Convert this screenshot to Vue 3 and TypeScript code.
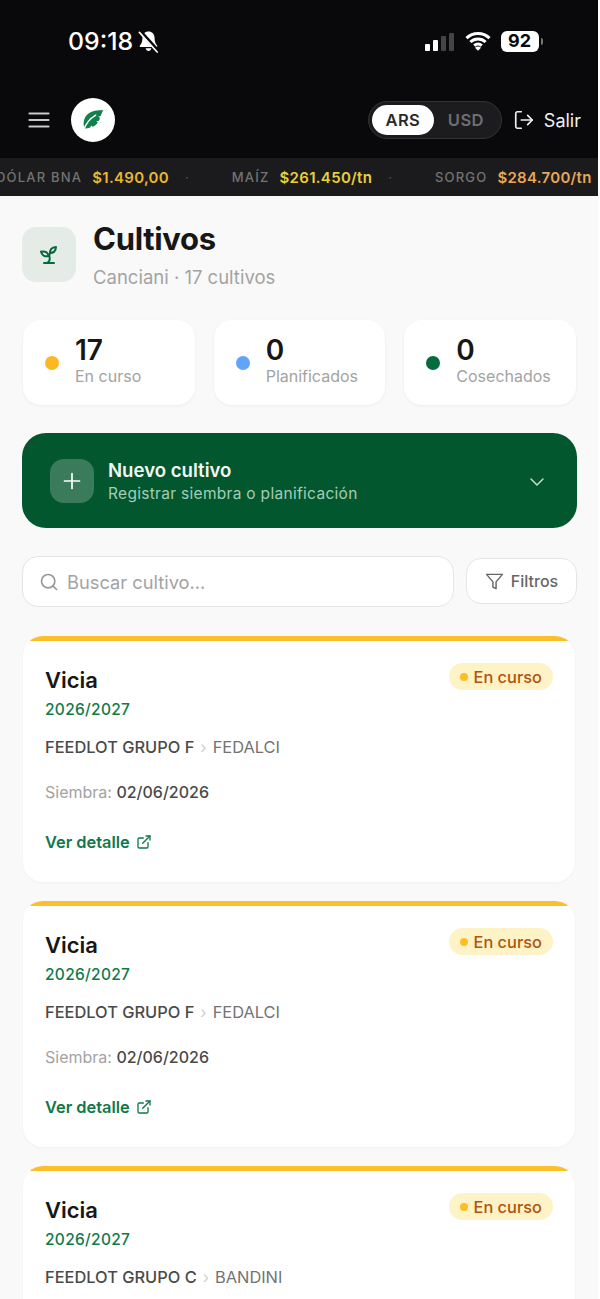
<script setup lang="ts">
interface Ticker { label: string; value: string; tone: string }
interface Crop { name: string; season: string; owner: string; field: string; date: string }

const tickers: Ticker[] = [
  { label: 'DÓLAR BNA', value: '$1.490,00', tone: 'gold' },
  { label: 'MAÍZ', value: '$261.450/tn', tone: 'yellow' },
  { label: 'SORGO', value: '$284.700/tn', tone: 'orange' },
]

const stats = [
  { value: 17, label: 'En curso', color: '#fbb724' },
  { value: 0, label: 'Planificados', color: '#60a5fa' },
  { value: 0, label: 'Cosechados', color: '#046c3c' },
]

const crops: Crop[] = [
  { name: 'Vicia', season: '2026/2027', owner: 'FEEDLOT GRUPO F', field: 'FEDALCI', date: '02/06/2026' },
  { name: 'Vicia', season: '2026/2027', owner: 'FEEDLOT GRUPO F', field: 'FEDALCI', date: '02/06/2026' },
  { name: 'Vicia', season: '2026/2027', owner: 'FEEDLOT GRUPO C', field: 'BANDINI', date: '02/06/2026' },
]
</script>

<template>
  <div class="screen">
    <header class="top">
      <div class="status">
        <div class="status-left">
          <span class="clock">09:18</span>
          <svg class="bell" viewBox="0 0 24 24" width="23" height="23" fill="#fff">
            <path d="M12 1.500c-3.800 0-6.300 2.800-6.300 6.700 0 4.500-1.100 6.300-2.700 8.100-.5.6-.1 1.500.7 1.500h16.600c.8 0 1.200-.9.7-1.500-1.600-1.800-2.700-3.600-2.700-8.100 0-3.900-2.500-6.700-6.300-6.700z" />
            <path d="M9 19h6c-.3 1.700-1.500 2.800-3 2.800s-2.700-1.100-3-2.800z" />
            <path d="M3.500 1.500 22 22" stroke="#09090b" stroke-width="3.800" />
            <path d="M2.500 2.500 21 23" stroke="#fff" stroke-width="1.700" stroke-linecap="round" />
          </svg>
        </div>
        <div class="status-right">
          <div class="signal">
            <i class="on h1"></i><i class="on h2"></i><i class="h3"></i><i class="h4"></i>
          </div>
          <svg class="wifi" viewBox="0 0 26 20" width="26" height="20">
            <path d="M1.500 7.200a16.500 16.500 0 0 1 23 0M5.400 11a11 11 0 0 1 15.200 0M9.200 14.600a5.600 5.600 0 0 1 7.600 0" fill="none" stroke="#fff" stroke-width="3" />
            <path d="M13 19.800 10 16.700a4.200 4.200 0 0 1 6 0z" fill="#fff" />
          </svg>
          <div class="battery"><span class="battery-num">92</span><i class="battery-cap"></i></div>
        </div>
      </div>

      <div class="nav">
        <div class="nav-left">
          <svg viewBox="0 0 22 18" width="22" height="18" fill="none" stroke="#c9c9c9" stroke-width="2.200" stroke-linecap="round">
            <path d="M1.500 2.500h19M1.500 9h19M1.500 15.500h19" />
          </svg>
          <div class="logo">
            <svg viewBox="0 0 24 24" width="26" height="26">
              <path d="M21.500 2.800c-5.300.3-10.600.7-13.900 3.400C4 9.100 3 13.400 3.500 17.300c.1 1 .4 1.900.8 2.500 1.400.1 3.300-.2 5.200-.8l.8-2 1.300 1.200c2.200-1 3.900-2.400 4.900-4l-1.500-1 2.500-.6c.4-.9.800-1.800 1-2.700l-1.800-.8 2.400-.9c.6-1.800 1.400-3.600 2.400-5.400z" fill="#11804e" />
              <path d="M3.200 22c1.700-6.200 5.300-10.900 11.300-14.500" fill="none" stroke="#fff" stroke-width="1.200" stroke-linecap="round" />
            </svg>
          </div>
        </div>
        <div class="nav-right">
          <div class="currency">
            <span class="cur active">ARS</span>
            <span class="cur">USD</span>
          </div>
          <div class="logout">
            <svg viewBox="0 0 24 24" width="22" height="22" fill="none" stroke="#f2f2f2" stroke-width="1.800" stroke-linecap="round" stroke-linejoin="round">
              <path d="M9 21H5a2 2 0 0 1-2-2V5a2 2 0 0 1 2-2h4" />
              <path d="m16 17 5-5-5-5" />
              <path d="M21 12H9" />
            </svg>
            <span>Salir</span>
          </div>
        </div>
      </div>

      <div class="ticker">
        <div class="ticker-track">
          <template v-for="(t, i) in tickers" :key="t.label">
            <span class="tick-label">{{ t.label }}</span>
            <span class="tick-value" :class="t.tone">{{ t.value }}</span>
            <span v-if="i < tickers.length - 1" class="tick-sep">·</span>
          </template>
        </div>
      </div>
    </header>

    <main class="page">
      <section class="head">
        <div class="head-icon">
          <svg viewBox="0 0 24 24" width="24" height="24" fill="none" stroke="#056b3c" stroke-width="2" stroke-linecap="round" stroke-linejoin="round">
            <path d="M7 20h10" />
            <path d="M10 20c5.500-2.500.8-6.400 3-10" />
            <path d="M9.500 9.400c1.100.8 1.800 2.200 2.300 3.700-2 .4-3.500.4-4.800-.3-1.200-.6-2.300-1.900-3-4.200 2.800-.5 4.400 0 5.500.8z" />
            <path d="M14.100 6a7 7 0 0 0-1.100 4c1.900-.1 3.300-.6 4.300-1.400 1-1 1.600-2.300 1.700-4.600-2.700.1-4 1-4.900 2z" />
          </svg>
        </div>
        <div>
          <h1>Cultivos</h1>
          <p>Canciani · 17 cultivos</p>
        </div>
      </section>

      <section class="stats">
        <div v-for="s in stats" :key="s.label" class="stat">
          <i class="stat-dot" :style="{ background: s.color }"></i>
          <div>
            <div class="stat-value">{{ s.value }}</div>
            <div class="stat-label">{{ s.label }}</div>
          </div>
        </div>
      </section>

      <section class="new-crop">
        <div class="plus">
          <svg viewBox="0 0 24 24" width="24" height="24" fill="none" stroke="#fff" stroke-width="1.700" stroke-linecap="round">
            <path d="M12 4.500v15M4.500 12h15" />
          </svg>
        </div>
        <div class="new-text">
          <div class="new-title">Nuevo cultivo</div>
          <div class="new-sub">Registrar siembra o planificación</div>
        </div>
        <svg class="chev" viewBox="0 0 16 10" width="16" height="10" fill="none" stroke="#c5dccd" stroke-width="1.500" stroke-linecap="round" stroke-linejoin="round">
          <path d="m2 2 6 6 6-6" />
        </svg>
      </section>

      <section class="search-row">
        <div class="search">
          <svg viewBox="0 0 24 24" width="20" height="20" fill="none" stroke="#999" stroke-width="2" stroke-linecap="round">
            <circle cx="11" cy="11" r="8" />
            <path d="m21 21-4.300-4.300" />
          </svg>
          <span>Buscar cultivo...</span>
        </div>
        <div class="filters">
          <svg viewBox="0 0 24 24" width="19" height="19" fill="none" stroke="#666" stroke-width="1.800" stroke-linejoin="round">
            <path d="M22 3H2l8 9.460V19l4 2v-8.540L22 3z" />
          </svg>
          <span>Filtros</span>
        </div>
      </section>

      <section class="cards">
        <article v-for="(c, i) in crops" :key="i" class="card">
          <div class="card-band"></div>
          <div class="card-body">
            <div class="card-top">
              <div>
                <h2>{{ c.name }}</h2>
                <div class="season">{{ c.season }}</div>
              </div>
              <div class="badge"><i></i>En curso</div>
            </div>
            <div class="place">
              <span class="owner">{{ c.owner }}</span>
              <span class="sep">›</span>
              <span class="field">{{ c.field }}</span>
            </div>
            <div class="sow"><span>Siembra:</span> <b>{{ c.date }}</b></div>
            <div class="detail">
              Ver detalle
              <svg viewBox="0 0 24 24" width="16" height="16" fill="none" stroke="#12774a" stroke-width="2" stroke-linecap="round" stroke-linejoin="round">
                <path d="M15 3h6v6" />
                <path d="M10 14 21 3" />
                <path d="M18 13v6a2 2 0 0 1-2 2H5a2 2 0 0 1-2-2V8a2 2 0 0 1 2-2h6" />
              </svg>
            </div>
          </div>
        </article>
      </section>
    </main>
  </div>
</template>

<style>
html, body { background: #fff; }
</style>

<style scoped>
.screen {
  width: 598px;
  height: 1299px;
  overflow: hidden;
  background: #f9f9f9;
  font-family: Inter, "Liberation Sans", sans-serif;
  color: #171717;
}
.top { background: #09090b; }
.status {
  height: 82px;
  padding: 0 59px 0 68px;
  display: flex;
  align-items: center;
  justify-content: space-between;
}
.status-left { display: flex; align-items: center; gap: 4px; }
.clock { color: #fff; font-size: 24.800px; font-weight: 500; letter-spacing: 0; }
.status-right { display: flex; align-items: center; gap: 10px; }
.signal { display: flex; align-items: flex-end; gap: 3px; height: 19px; margin-right: 1px; }
.signal i { width: 5px; border-radius: 1px; background: #444; }
.signal .on { background: #fff; }
.h1 { height: 7px; }
.h2 { height: 11px; }
.h3 { height: 15px; }
.h4 { height: 18px; }
.battery {
  position: relative;
  width: 38px;
  height: 21px;
  box-sizing: border-box;
  background: #fff;
  border-radius: 6px;
  display: flex;
  align-items: center;
  padding-left: 7px;
}
.battery-num { color: #0a0a0a; font-size: 18px; font-weight: 700; line-height: 1; }
.battery-cap {
  position: absolute;
  right: -4px;
  top: 7px;
  width: 2px;
  height: 7px;
  background: #777;
  border-radius: 0 2px 2px 0;
}
.nav {
  height: 76px;
  padding: 0 17px 0 28px;
  display: flex;
  align-items: center;
  justify-content: space-between;
}
.nav-left { display: flex; align-items: center; gap: 21px; }
.logo {
  width: 44px;
  height: 44px;
  border-radius: 50%;
  background: #fff;
  display: flex;
  align-items: center;
  justify-content: center;
}
.nav-right { display: flex; align-items: center; gap: 11px; }
.currency {
  width: 134px;
  height: 38px;
  box-sizing: border-box;
  padding: 3px;
  border: 1px solid #333336;
  border-radius: 19px;
  background: #1c1c1f;
  display: flex;
}
.cur {
  flex: 1;
  border-radius: 16px;
  display: flex;
  align-items: center;
  justify-content: center;
  color: #6e6e72;
  font-size: 16.500px;
  font-weight: 600;
  letter-spacing: .4px;
}
.cur.active { flex: 0 0 62px; background: #fff; color: #2a2a2a; }
.logout { display: flex; align-items: center; gap: 9px; color: #f2f2f2; font-size: 18px; }
.ticker {
  height: 38px;
  background: #1b1b1d;
  overflow: hidden;
  display: flex;
  align-items: center;
}
.ticker-track {
  display: flex;
  align-items: center;
  margin-left: -4px;
  white-space: nowrap;
}
.tick-label {
  color: #737373;
  font-size: 13px;
  font-weight: 500;
  letter-spacing: 1.200px;
  margin-right: 10px;
}
.tick-value { font-size: 15px; font-weight: 600; letter-spacing: .3px; }
.gold { color: #eab62e; }
.yellow { color: #e8cf3d; }
.orange { color: #e8a657; }
.tick-sep { color: #555; font-size: 13px; margin: 0 43px 0 16px; }
.page { padding: 31px 21px 0 22px; }
.head { display: flex; gap: 17px; align-items: flex-start; }
.head-icon {
  width: 54px;
  height: 55px;
  border-radius: 14px;
  background: #e5ece8;
  display: flex;
  align-items: center;
  justify-content: center;
}
h1 { margin: -8px 0 0; font-size: 31px; line-height: 40px; font-weight: 700; letter-spacing: -.3px; }
.head p { margin: 7px 0 0; font-size: 18.500px; line-height: 22px; color: #a3a3a3; }
.stats {
  margin-top: 32px;
  padding: 0 1px;
  display: grid;
  grid-template-columns: repeat(3, 1fr);
  gap: 19px;
}
.stat {
  height: 85px;
  box-sizing: border-box;
  padding: 0 0 0 22px;
  border-radius: 18px;
  background: #fff;
  box-shadow: 0 1px 3px rgba(0, 0, 0, .06);
  display: flex;
  align-items: center;
  gap: 16px;
}
.stat-dot { width: 14px; height: 14px; border-radius: 50%; flex: none; }
.stat-value { font-size: 28px; line-height: 32px; font-weight: 600; margin-top: -4px; }
.stat-label { font-size: 16px; line-height: 21px; color: #a3a3a3; }
.new-crop {
  margin-top: 28px;
  height: 95px;
  box-sizing: border-box;
  padding: 2px 32px 0 28px;
  border-radius: 24px;
  background: #03572e;
  display: flex;
  align-items: center;
  gap: 14px;
}
.plus {
  width: 44px;
  height: 44px;
  margin-top: -2px;
  border-radius: 14px;
  background: rgba(255, 255, 255, .22);
  display: flex;
  align-items: center;
  justify-content: center;
}
.new-text { flex: 1; }
.new-title { color: #f5f7f5; font-size: 18.600px; line-height: 24px; font-weight: 600; }
.new-sub { color: #a3cdb4; font-size: 15.500px; line-height: 24px; letter-spacing: .3px; }
.search-row { margin-top: 28px; display: flex; align-items: center; gap: 12px; }
.search {
  flex: 1;
  height: 51px;
  box-sizing: border-box;
  padding: 0 16px;
  border: 1px solid #e5e5e5;
  border-radius: 16px;
  background: #fff;
  display: flex;
  align-items: center;
  gap: 8px;
  color: #a3a3a3;
  font-size: 18.300px;
}
.filters {
  width: 111px;
  height: 46px;
  margin-top: -1px;
  box-sizing: border-box;
  border: 1px solid #e5e5e5;
  border-radius: 15px;
  background: #fff;
  display: flex;
  align-items: center;
  justify-content: center;
  gap: 7px;
  color: #666;
  font-size: 16px;
  font-weight: 500;
}
.cards { margin-top: 29px; padding: 0 2px 0 1px; display: flex; flex-direction: column; gap: 19px; }
.card {
  height: 246px;
  flex: none;
  border-radius: 20px;
  background: #fff;
  overflow: hidden;
  box-shadow: 0 1px 3px rgba(0, 0, 0, .04);
}
.card-band { height: 5px; background: #fbbf2c; }
.card-body { padding: 22px 22px 0; }
.card-top { display: flex; justify-content: space-between; align-items: flex-start; }
h2 { margin: 0; font-size: 22px; line-height: 34px; font-weight: 600; }
.season { margin-top: 3px; font-size: 15.500px; line-height: 20px; color: #0f7a4b; font-weight: 500; letter-spacing: .3px; }
.badge {
  height: 27px;
  padding: 0 11px;
  border-radius: 14px;
  background: #fef3c7;
  display: flex;
  align-items: center;
  gap: 6px;
  color: #b45309;
  font-size: 16.400px;
  font-weight: 500;
}
.badge i { width: 8px; height: 8px; border-radius: 50%; background: #fbbf24; }
.place { margin-top: 17px; display: flex; align-items: center; gap: 6px; font-size: 16.400px; line-height: 20px; }
.owner { color: #4a4a4a; font-weight: 500; }
.sep { color: #cfcfcf; }
.field { color: #737373; }
.sow { margin-top: 25px; font-size: 16px; line-height: 20px; }
.sow span { color: #a3a3a3; }
.sow b { color: #4a4a4a; font-weight: 500; }
.detail {
  margin-top: 30px;
  display: flex;
  align-items: center;
  gap: 6px;
  color: #12774a;
  font-size: 16.400px;
  line-height: 20px;
  font-weight: 600;
}
</style>
